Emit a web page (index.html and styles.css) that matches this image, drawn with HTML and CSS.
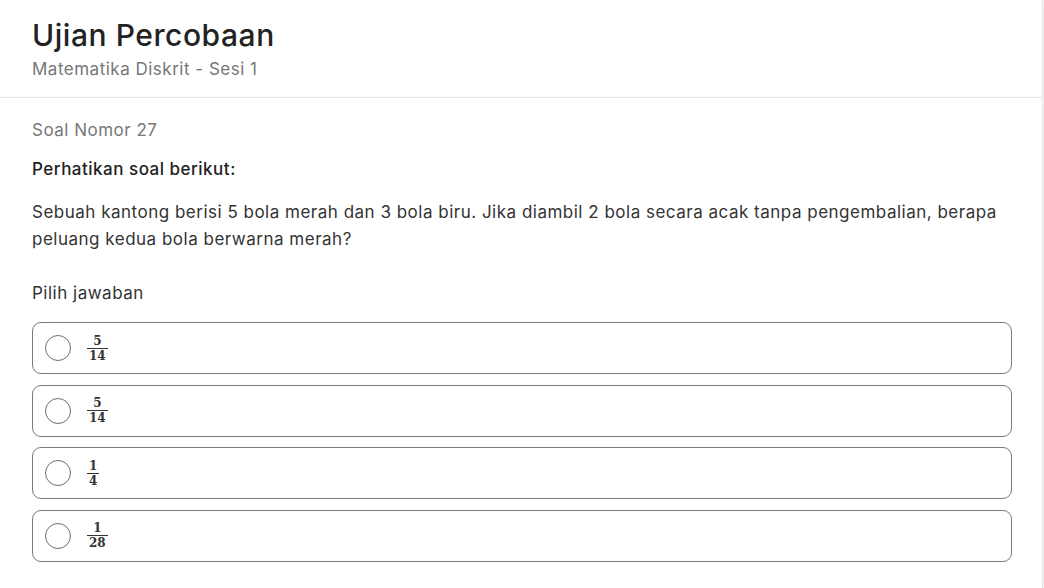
FILE: index.html
```html
<!DOCTYPE html>
<html lang="id">

<head>
    <meta charset="UTF-8">
    <meta name="viewport" content="width=device-width, initial-scale=1.0">
    <title>Ujian Percobaan</title>
    <link rel="stylesheet" href="styles.css">
</head>

<body>
    <div class="exam-card">
        <!-- Header ujian -->
        <div class="exam-header">
            <h1 class="exam-title">Ujian Percobaan</h1>
            <p class="exam-subtitle">Matematika Diskrit - Sesi 1</p>
        </div>

        <!-- Isi soal -->
        <div class="exam-body">
            <p class="question-number">Soal Nomor 27</p>
            <p class="question-intro">Perhatikan soal berikut:</p>
            <p class="question-text">Sebuah kantong berisi 5 bola merah dan 3 bola biru. Jika diambil 2 bola secara acak tanpa pengembalian, berapa peluang kedua bola berwarna merah?</p>

            <p class="answer-label">Pilih jawaban</p>

            <div class="option-list">
                <label class="option">
                    <span class="radio"></span>
                    <span class="frac"><span class="num">5</span><span class="den">14</span></span>
                </label>
                <label class="option">
                    <span class="radio"></span>
                    <span class="frac"><span class="num">5</span><span class="den">14</span></span>
                </label>
                <label class="option">
                    <span class="radio"></span>
                    <span class="frac"><span class="num">1</span><span class="den">4</span></span>
                </label>
                <label class="option">
                    <span class="radio"></span>
                    <span class="frac"><span class="num">1</span><span class="den">28</span></span>
                </label>
            </div>
        </div>
    </div>
</body>

</html>
```

FILE: styles.css
```css
/* Reset styling */
* {
    margin: 0;
    padding: 0;
    box-sizing: border-box;
    font-family: Inter, "Noto Sans", sans-serif;
}

body {
    background-color: #fafafa;
}

/* Card */
.exam-card {
    width: 1043px;
    min-height: 588px;
    background-color: #fff;
    border-right: 1px solid #e6e6e6;
    box-shadow: 1px 0 3px rgba(0, 0, 0, 0.05);
}

/* Header */
.exam-header {
    padding: 16px 32px 16px;
    border-bottom: 1px solid #e5e5e5;
}

.exam-title {
    font-size: 30px;
    font-weight: 500;
    color: #222;
    line-height: 38px;
    letter-spacing: 0.55px;
}

.exam-subtitle {
    font-size: 17px;
    color: #777;
    line-height: 24px;
    margin-top: 3px;
    letter-spacing: 0.5px;
}

/* Body */
.exam-body {
    padding: 20px 32px 20px;
}

.question-number,
.question-intro,
.question-text,
.answer-label {
    font-size: 17px;
    letter-spacing: 0.5px;
}

.question-number {
    color: #777;
    line-height: 24px;
}

.question-intro {
    margin-top: 15px;
    font-weight: 500;
    color: #222;
    line-height: 24px;
}

.question-text {
    margin-top: 18px;
    color: #333;
    line-height: 27px;
}

.answer-label {
    margin-top: 28px;
    color: #333;
    line-height: 24px;
}

/* Options */
.option-list {
    margin-top: 17px;
    display: flex;
    flex-direction: column;
    gap: 10.5px;
    width: 980px;
}

.option {
    display: flex;
    align-items: center;
    height: 52px;
    padding: 0 12px;
    border: 1.5px solid #7a7a7a;
    border-radius: 9px;
    cursor: pointer;
}

.radio {
    width: 26px;
    height: 26px;
    border: 1.5px solid #6e6e6e;
    border-radius: 50%;
    margin-right: 16px;
}

/* Fraction (math) */
.frac {
    display: inline-flex;
    flex-direction: column;
    align-items: center;
}

.frac span {
    font-family: "DejaVu Serif", "Liberation Serif", serif;
    font-size: 12px;
    font-weight: bold;
    color: #333;
    line-height: 10px;
    letter-spacing: 0;
    padding: 0 2px;
}

.frac .num {
    border-bottom: 1px solid #333;
    padding-bottom: 2px;
    align-self: stretch;
    text-align: center;
}

.frac .den {
    padding-top: 2px;
}
```
